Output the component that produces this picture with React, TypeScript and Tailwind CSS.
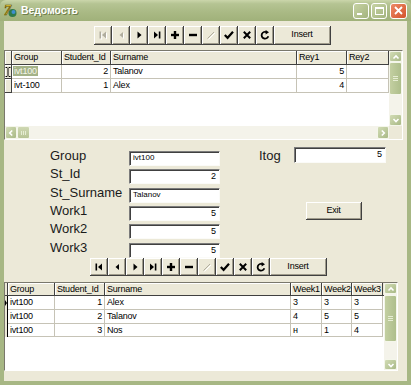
import React from "react";

type NavKind =
  | "first"
  | "prior"
  | "next"
  | "last"
  | "insert"
  | "delete"
  | "edit"
  | "post"
  | "cancel"
  | "refresh";

function Glyph({ kind, color }: { kind: NavKind; color: string }) {
  switch (kind) {
    case "first":
      return (
        <g fill={color}>
          <rect x="4.5" y="4.5" width="1.6" height="7" />
          <polygon points="11,4.5 11,11.5 7,8" />
        </g>
      );
    case "prior":
      return <polygon fill={color} points="10,5 10,11 6.5,8" />;
    case "next":
      return <polygon fill={color} points="6.5,4.5 6.5,11.5 10.5,8" />;
    case "last":
      return (
        <g fill={color}>
          <polygon points="5,4.5 5,11.5 9,8" />
          <rect x="9.8" y="4.5" width="1.6" height="7" />
        </g>
      );
    case "insert":
      return (
        <g fill={color}>
          <rect x="4" y="6.8" width="8" height="2.4" />
          <rect x="6.8" y="4" width="2.4" height="8" />
        </g>
      );
    case "delete":
      return <rect fill={color} x="4" y="6.8" width="8" height="2.4" />;
    case "edit":
      return (
        <path d="M4.5 11.5 L11 5" stroke={color} strokeWidth="1" fill="none" />
      );
    case "post":
      return (
        <path
          d="M3.8 8 L6.6 10.8 L12 4.8"
          stroke={color}
          strokeWidth="2.2"
          fill="none"
        />
      );
    case "cancel":
      return (
        <path
          d="M4.8 4.8 L11.2 11.2 M11.2 4.8 L4.8 11.2"
          stroke={color}
          strokeWidth="2"
          fill="none"
        />
      );
    case "refresh":
      return (
        <g>
          <path
            d="M11.3 9.2 A3.4 3.4 0 1 1 9.6 5.2"
            stroke={color}
            strokeWidth="1.8"
            fill="none"
          />
          <polygon fill={color} points="8.6,3 12,5.3 8.6,7.6" />
        </g>
      );
  }
}

function NavIcon({ kind, disabled }: { kind: NavKind; disabled: boolean }) {
  return (
    <svg width="16" height="16" viewBox="0 0 16 16">
      {disabled && (
        <g transform="translate(1,1)">
          <Glyph kind={kind} color="#ffffff" />
        </g>
      )}
      <Glyph kind={kind} color={disabled ? "#b0ad9e" : "#000000"} />
    </svg>
  );
}

const raised =
  "bg-[#ece9d8] border-r border-b border-[#404040] shadow-[inset_1px_1px_0_#ffffff,inset_-1px_-1px_0_#a09c8c]";

function NavBar({ disabled, h }: { disabled: NavKind[]; h: string }) {
  const kinds: NavKind[] = [
    "first",
    "prior",
    "next",
    "last",
    "insert",
    "delete",
    "edit",
    "post",
    "cancel",
    "refresh",
  ];
  return (
    <div className={"flex " + h}>
      {kinds.map((k) => (
        <div
          key={k}
          className={"w-[18px] h-full flex items-center justify-center " + raised}
        >
          <NavIcon kind={k} disabled={disabled.includes(k)} />
        </div>
      ))}
      <div
        className={
          "w-[57px] h-full flex items-center justify-center text-[9px] tracking-[-0.2px] text-black " +
          raised
        }
      >
        Insert
      </div>
    </div>
  );
}

const sbBtn =
  "rounded-[2px] border border-[#f4f6ea] bg-[linear-gradient(135deg,#d2dcb5,#a9b986)] flex items-center justify-center";

function Chevron({ dir }: { dir: "up" | "down" | "left" | "right" }) {
  const d =
    dir === "up"
      ? "M2.5 6.5 L5 4 L7.5 6.5"
      : dir === "down"
      ? "M2.5 4 L5 6.5 L7.5 4"
      : dir === "left"
      ? "M6.2 2.5 L3.7 5 L6.2 7.5"
      : "M3.8 2.5 L6.3 5 L3.8 7.5";
  return (
    <svg width="10" height="10" viewBox="0 0 10 10">
      <path d={d} stroke="#ffffff" strokeWidth="1.6" fill="none" />
    </svg>
  );
}

function VThumb({ h }: { h: string }) {
  return (
    <div
      className={
        "w-full rounded-[2px] border border-[#f4f6ea] bg-[linear-gradient(90deg,#c3cfa1,#aebe8b)] flex flex-col items-center justify-center gap-[1px] " +
        h
      }
    >
      <div className="w-[5px] h-[1px] bg-[#e6edd3]" />
      <div className="w-[5px] h-[1px] bg-[#e6edd3]" />
      <div className="w-[5px] h-[1px] bg-[#e6edd3]" />
    </div>
  );
}

type Col = { w: string; t: string; r?: boolean };

const topCols: Col[] = [
  { w: "w-[50px]", t: "Group" },
  { w: "w-[49px]", t: "Student_Id", r: true },
  { w: "w-[186px]", t: "Surname" },
  { w: "w-[50px]", t: "Rey1", r: true },
  { w: "w-[42px]", t: "Rey2", r: true },
];

const botCols: Col[] = [
  { w: "w-[47px]", t: "Group" },
  { w: "w-[50px]", t: "Student_Id", r: true },
  { w: "w-[186px]", t: "Surname" },
  { w: "w-[31px]", t: "Week1" },
  { w: "w-[30px]", t: "Week2" },
  { w: "w-[31px]", t: "Week3" },
];

function HeaderCell({ c }: { c: Col }) {
  return (
    <div
      className={
        "shrink-0 h-full border-r border-[#404040] pl-[2px] text-[9px] leading-[13px] tracking-[-0.2px] whitespace-nowrap overflow-hidden shadow-[inset_1px_1px_0_#ffffff] " +
        c.w
      }
    >
      {c.t}
    </div>
  );
}

function DataCell({ c, v, sel }: { c: Col; v: string; sel?: boolean }) {
  return (
    <div
      className={
        "shrink-0 h-full border-r border-b border-[#c6c3b6] text-[9px] leading-[13px] tracking-[-0.2px] whitespace-nowrap overflow-hidden bg-white " +
        (c.r ? "text-right pr-[2px] " : "pl-[2px] ") +
        c.w
      }
    >
      {sel ? (
        <span className="bg-[#a4b287] text-[#f4f6ea] px-[1px] -ml-[1px]">{v}</span>
      ) : (
        v
      )}
    </div>
  );
}

function IBeam() {
  return (
    <svg width="6" height="12" viewBox="0 0 6 12">
      <path
        d="M0.5 1.5 H2.3 M3.7 1.5 H5.5 M3 2 V10 M0.5 10.5 H2.3 M3.7 10.5 H5.5"
        stroke="#000"
        strokeWidth="1"
        fill="none"
      />
    </svg>
  );
}

function TopGrid() {
  const rows = [
    ["ivt100", "2", "Talanov", "5", ""],
    ["ivt-100", "1", "Alex", "4", ""],
  ];
  return (
    <div className="mt-[5px] w-[399px] h-[90px] border border-t-[#7a786c] border-l-[#7a786c] border-r-[#ffffff] border-b-[#ffffff] flex flex-col">
      <div className="flex h-[75px]">
        <div className="w-[384px] h-full bg-white overflow-hidden flex flex-col">
          <div className="flex h-[14px] shrink-0 bg-[#ece9d8] border-b border-[#404040]">
            <div className="w-[7px] shrink-0 h-full border-r border-[#404040] shadow-[inset_1px_1px_0_#ffffff]" />
            {topCols.map((c) => (
              <HeaderCell key={c.t} c={c} />
            ))}
          </div>
          {rows.map((r, i) => (
            <div key={i} className="flex h-[14px] shrink-0">
              <div className="w-[7px] shrink-0 h-full bg-[#ece9d8] border-r border-b border-[#404040] flex items-center justify-center shadow-[inset_1px_1px_0_#ffffff]">
                {i === 0 && <IBeam />}
              </div>
              {topCols.map((c, j) => (
                <DataCell key={j} c={c} v={r[j]} sel={i === 0 && j === 0} />
              ))}
            </div>
          ))}
        </div>
        <div className="w-[13px] h-full flex flex-col bg-[#f4f3ea]">
          <div className={"h-[11px] " + sbBtn}>
            <Chevron dir="up" />
          </div>
          <VThumb h="h-[33px]" />
          <div className="flex-1" />
          <div className={"h-[12px] " + sbBtn}>
            <Chevron dir="down" />
          </div>
        </div>
      </div>
      <div className="flex h-[13px]">
        <div className="w-[384px] h-full flex bg-[#f4f3ea]">
          <div className={"w-[12px] h-full " + sbBtn}>
            <Chevron dir="left" />
          </div>
          <div className="w-[13px] h-full rounded-[2px] border border-[#f4f6ea] bg-[linear-gradient(180deg,#cfd8b3,#b7c495)] flex items-center justify-center gap-[1px]">
            <div className="w-[1px] h-[4px] bg-[#e6edd3]" />
            <div className="w-[1px] h-[4px] bg-[#e6edd3]" />
            <div className="w-[1px] h-[4px] bg-[#e6edd3]" />
          </div>
          <div className="flex-1" />
          <div className={"w-[12px] h-full " + sbBtn}>
            <Chevron dir="right" />
          </div>
        </div>
        <div className="w-[13px] h-full bg-[#ece9d8]" />
      </div>
    </div>
  );
}

function BottomGrid() {
  const rows = [
    { h: "h-[14px]", v: ["ivt100", "1", "Alex", "3", "3", "3"] },
    { h: "h-[14px]", v: ["ivt100", "2", "Talanov", "4", "5", "5"] },
    { h: "h-[13px]", v: ["ivt100", "3", "Nos", "н", "1", "4"] },
  ];
  return (
    <div className="mt-[6px] w-[394px] h-[89px] border border-t-[#7a786c] border-l-[#7a786c] border-r-[#ffffff] border-b-[#ffffff] flex">
      <div className="w-[379px] h-full bg-white overflow-hidden flex flex-col">
        <div className="flex h-[13px] shrink-0 bg-[#ece9d8] border-b border-[#404040]">
          <div className="w-[3px] shrink-0 h-full border-r border-[#404040]" />
          {botCols.map((c) => (
            <HeaderCell key={c.t} c={c} />
          ))}
        </div>
        {rows.map((r, i) => (
          <div key={i} className={"flex shrink-0 " + r.h}>
            <div className="w-[3px] shrink-0 h-full bg-[#ece9d8] border-r border-[#000] flex items-center">
              {i === 0 && (
                <svg width="2" height="6" viewBox="0 0 2 6">
                  <polygon points="0,0 2,3 0,6" fill="#000" />
                </svg>
              )}
            </div>
            {botCols.map((c, j) => (
              <DataCell key={j} c={c} v={r.v[j]} />
            ))}
          </div>
        ))}
      </div>
      <div className="w-[13px] h-full flex flex-col bg-[#f4f3ea]">
        <div className={"h-[11px] " + sbBtn}>
          <Chevron dir="up" />
        </div>
        <div className="h-[1px]" />
        <VThumb h="h-[47px]" />
        <div className="flex-1" />
        <div className={"h-[11px] " + sbBtn}>
          <Chevron dir="down" />
        </div>
      </div>
    </div>
  );
}

function Field({
  v,
  right,
  cls,
}: {
  v: string;
  right?: boolean;
  cls: string;
}) {
  return (
    <div
      className={
        "bg-white border border-t-[#7b7b7b] border-l-[#7b7b7b] border-r-[#fbfbf8] border-b-[#fbfbf8] shadow-[inset_1px_1px_0_#404040] whitespace-nowrap overflow-hidden " +
        (right
          ? "text-right pr-[3px] text-[9px] leading-[13px] "
          : "pl-[3px] text-[8px] leading-[12px] ") +
        cls
      }
    >
      {v}
    </div>
  );
}

function Form() {
  const rows = [
    { h: "h-[18px]", l: "Group", v: "ivt100", r: false },
    { h: "h-[19px]", l: "St_Id", v: "2", r: true },
    { h: "h-[18px]", l: "St_Surname", v: "Talanov", r: false },
    { h: "h-[18px]", l: "Work1", v: "5", r: true },
    { h: "h-[19px]", l: "Work2", v: "5", r: true },
    { h: "h-[18px]", l: "Work3", v: "5", r: true },
  ];
  return (
    <div className="flex mt-[8px] h-[110px]">
      <div className="ml-[46px] flex flex-col">
        {rows.map((r) => (
          <div key={r.l} className={"flex items-start " + r.h}>
            <div className="w-[79px] text-[13px] leading-[15px] text-[#1a1a1a]">
              {r.l}
            </div>
            <Field v={r.v} right={r.r} cls="mt-[3px] w-[91px] h-[15px]" />
          </div>
        ))}
      </div>
      <div className="ml-[39px] flex flex-col">
        <div className="flex items-start -mt-[1px]">
          <div className="w-[35px] text-[13px] leading-[15px] mt-[1px] text-[#1a1a1a]">
            Itog
          </div>
          <Field v="5" right cls="w-[92px] h-[16px]" />
        </div>
        <div
          className={
            "ml-[47px] mt-[39px] w-[56px] h-[18px] flex items-center justify-center text-[9px] tracking-[-0.2px] " +
            raised
          }
        >
          Exit
        </div>
      </div>
    </div>
  );
}

function AppIcon() {
  return (
    <svg width="14" height="15" viewBox="0 0 14 15">
      <circle cx="8.5" cy="10" r="4" fill="#2f7a4a" />
      <circle cx="9.5" cy="9" r="2" fill="#3d8fd0" />
      <text
        x="0"
        y="12"
        fontSize="14"
        fontWeight="bold"
        fontStyle="italic"
        fill="#f2d23a"
        stroke="#5a4a00"
        strokeWidth="0.6"
        fontFamily="Liberation Serif, serif"
      >
        7
      </text>
    </svg>
  );
}

export default function App() {
  return (
    <div className="w-[411px] h-[385px] flex flex-col bg-[#a7b784] font-['Liberation_Sans',Arial,sans-serif] text-black overflow-hidden">
      <div className="h-[21px] shrink-0 flex items-center bg-[linear-gradient(180deg,#cbd6ab_0%,#b5c493_18%,#a9b984_60%,#a0b17a_100%)] rounded-t-[6px]">
        <div className="ml-[4px] w-[14px] h-[15px] flex items-center">
          <AppIcon />
        </div>
        <div className="ml-[3px] text-[10.5px] font-bold text-white tracking-[-0.1px] [text-shadow:1px_1px_0_#6f7f4c]">
          Ведомость
        </div>
        <div className="ml-auto mr-[4px] flex gap-[2px] items-center">
          <div className="w-[16px] h-[16px] rounded-[3px] border border-white bg-[linear-gradient(135deg,#c6d2a3,#a4b47f)] flex items-end justify-start">
            <div className="ml-[3px] mb-[3px] w-[5px] h-[2px] bg-white" />
          </div>
          <div className="w-[16px] h-[16px] rounded-[3px] border border-white bg-[linear-gradient(135deg,#c6d2a3,#a4b47f)] flex items-center justify-center">
            <div className="w-[9px] h-[8px] border border-white border-t-2" />
          </div>
          <div className="ml-[1px] w-[17px] h-[16px] rounded-[3px] border border-white bg-[linear-gradient(135deg,#ec8a66,#d4532c)] flex items-center justify-center">
            <svg width="9" height="9" viewBox="0 0 9 9">
              <path d="M1 1 L8 8 M8 1 L1 8" stroke="#fff" strokeWidth="1.8" />
            </svg>
          </div>
        </div>
      </div>
      <div className="flex-1 flex px-[4px] pb-[4px]">
        <div className="w-[403px] h-[360px] bg-[#ece9d8] flex flex-col">
          <div className="mt-[5px] ml-[90px]">
            <NavBar disabled={["first", "prior", "edit"]} h="h-[19px]" />
          </div>
          <TopGrid />
          <Form />
          <div className="ml-[86px]">
            <NavBar disabled={["edit"]} h="h-[18px]" />
          </div>
          <BottomGrid />
        </div>
      </div>
    </div>
  );
}
